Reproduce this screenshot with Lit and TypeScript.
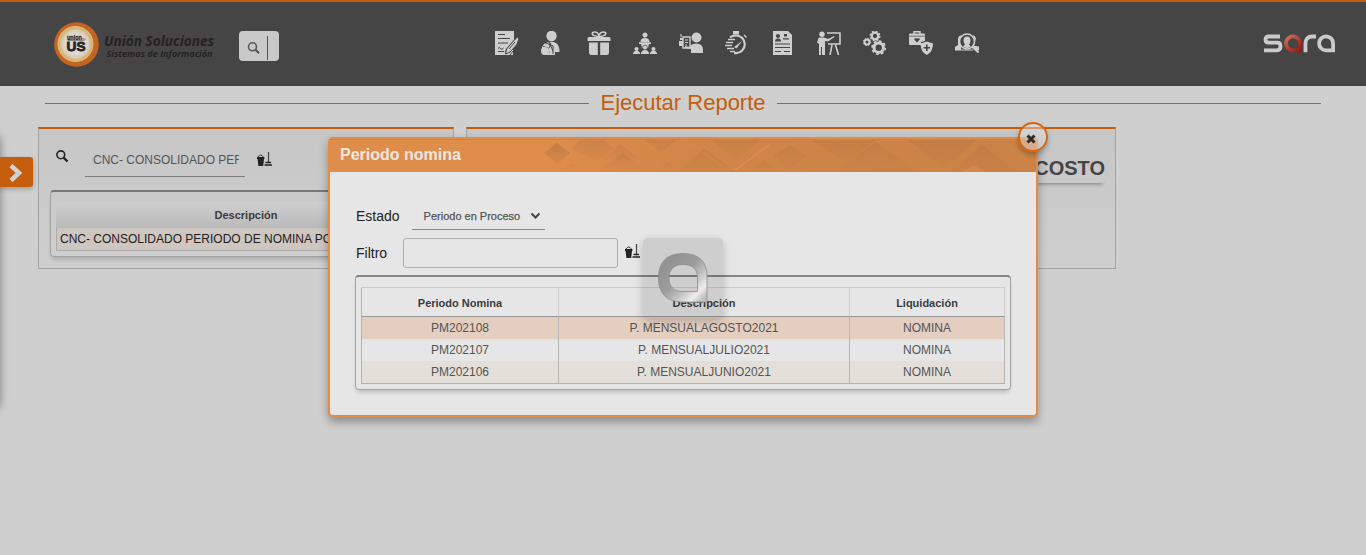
import { LitElement, html, css, svg } from "lit";
import { customElement } from "lit/decorators.js";

const navIcons = [
  // form with pen
  svg`<path d="M0 0h19v9l-8 9-1 4 4-1 4-4v7H0z"/><path d="M3 3.500h7M3 7.500h12M3 12h10" stroke="#454545" stroke-width="1.100"/><path d="M3 17.500q1-2 2.500 0t3-.5M3 20.500h6" fill="none" stroke="#454545"/><path d="M22.500 6l1.500 2-2.500 6-6.500 7-4.500 2 1-5 7-8z" stroke="#454545" stroke-width="1"/><path d="M14 18l6-7M15 24l3-4" stroke="#454545"/>`,
  // person with money
  svg`<circle cx="10.500" cy="5" r="5.200"/><path d="M3 13q7-4 12-1 3.500 2 3.500 9H14v3H2l-1-8z"/><path d="M5 12l7 3v8M8 11l4 9M10 12l-2 5M2 15.500l5 1.500 1 5" fill="none" stroke="#454545"/><circle cx="4" cy="20" r="4"/>`,
  // gift
  svg`<path d="M2 6h20q1.500 0 1.500 1.500V10H.5V7.500Q.5 6 2 6zM2 11.500h8.800V24H4.500Q2 24 2 21.500zM13.200 11.500H22v10q0 2.500-2.500 2.500h-6.300z"/><path d="M11 5.500C4 5 4 1 7.500 1 10 1 11.500 3 12 4.500 12.500 3 14 1 16.500 1 20 1 20 5 13 5.500z" fill="none" stroke="#cecece" stroke-width="1.600"/>`,
  // speaker and audience
  svg`<circle cx="12" cy="4" r="2.500"/><path d="M7.500 11q0-4 4.500-4t4.500 4zM6 11.200h12v1.800H6zM8 13h8l-1 4H9z"/><circle cx="3.500" cy="18" r="2"/><circle cx="12" cy="16.500" r="2.400" stroke="#454545" stroke-width=".7"/><circle cx="20.500" cy="18" r="2"/><path d="M0 23v-1q1-2.500 3.500-2.500T7 22v1zM8 23v-1q1-3 4-3t4 3v1zM17 23v-1q1-2.500 3.500-2.500T24 22v1z"/>`,
  // person holding a list
  svg`<circle cx="17.500" cy="6.500" r="5"/><path d="M11 15q2-2.500 6-2.500 7 0 7 6V22H12v-4l-6-1v-2l5 1z"/><path d="M4 6h7v11H4z" fill="none" stroke="#cecece" stroke-width="1.400"/><path d="M6 9h3M6 11.500h3M6 14h2" stroke="#cecece"/><path d="M0 10h4v5H0zM1 3l2 1-1 3zM1 7h3v2H1z"/>`,
  // stopwatch
  svg`<path d="M8 0h6v3.500H8z"/><path d="M11 4.500a8.800 8.800 0 0 1 0 17.600H9" fill="none" stroke="#cecece" stroke-width="2.200"/><path d="M11 4.500q-4 0-6 2" fill="none" stroke="#cecece" stroke-width="2"/><path d="M19 4l2.500 2.500M3 8.500h7M1 11.500h7M0 14.500h7M2 17.500h7M5 20.500h5" stroke="#cecece" stroke-width="1.400"/><path d="M9 16l8-6-5.500 7.500z"/>`,
  // résumé
  svg`<path d="M2 0h15l4 4v20H2z"/><circle cx="7" cy="5" r="2.100" fill="#454545"/><path d="M4 10.500q0-3 3-3t3 3zM13 3h3v2.500h-3z" fill="#454545"/><path d="M12 7.800h6M4 13h15M4 16.500h15M4 20.500h6M13 20.500h6" stroke="#454545" stroke-width="1.200"/>`,
  // trainer with board
  svg`<circle cx="5" cy="3.200" r="2.700"/><path d="M1 8.500q0-2 2-2h4l4 1.500 6-3 .5 1L11 10.500 8 10v14H5v-8H4v8H2V13L0 11.500z"/><path d="M10 2h13v11H11M15 14l-2 10M18.500 14l3 10" fill="none" stroke="#cecece" stroke-width="1.600"/>`,
  // gears
  svg`<g fill="none" stroke="#cecece"><circle cx="12" cy="5" r="3.300" stroke-width="2.300"/><circle cx="12" cy="5" r="4.900" stroke-width="1.300" stroke-dasharray="2 1.850"/><circle cx="4" cy="11" r="2.500" stroke-width="2"/><circle cx="4" cy="11" r="3.700" stroke-width="1" stroke-dasharray="1.500 1.400"/><circle cx="15.700" cy="16.700" r="4.700" stroke-width="3"/><circle cx="15.700" cy="16.700" r="6.600" stroke-width="1.700" stroke-dasharray="2.800 2.380"/></g>`,
  // briefcase and shield
  svg`<path d="M5 3V.8h6V3" fill="none" stroke="#cecece" stroke-width="1.500"/><path d="M1 2.500h14q1 0 1 1V10l-4 1v3H1q-1 0-1-1V3.500q0-1 1-1z"/><path d="M0 5.200h16" stroke="#454545" stroke-width=".7"/><path d="M8 11.500L5.200 8.500q0-2 2.800-1 2.800-1 2.800 1z" fill="#454545"/><path d="M17.800 10.500l6.200 2q0 8.500-6.200 11.500-6.300-3-6.300-11.500z"/><path d="M17.800 13.500v6.500M14.500 16.800h6.600" stroke="#454545" stroke-width="1.600"/>`,
  // talent search
  svg`<path d="M3 7.500q1-3.500 3-3v12l-6 1.500v-2l3-2zM21 7.500q-1-3.500-3-3v10l6 1.500v2l-6-1zM0 15.500l6-1v5H0zM18 14.500l6 1v4h-3z"/><circle cx="12" cy="10.500" r="7.500" fill="#454545" stroke="#cecece" stroke-width="1.600"/><path d="M12 5.500q3.500 0 3.500 4 0 2-1.500 4l2 2q-4 3-8 0l2-2q-1.500-2-1.500-4 0-4 3.500-4z"/><path d="M17 15.500l6.500 6" stroke="#cecece" stroke-width="2"/><path d="M6 19h12" stroke="#cecece" stroke-width="1"/>`,
];

const bucket = html`<svg class="bucket" width="15" height="15" viewBox="0 0 15 15">
  <path d="M0 5h7.400v2H7l-.8 7H1.400L.6 7H0z" fill="#222"/>
  <path d="M1 5q2.500-4 5.400 0" fill="none" stroke="#222" stroke-width=".9"/>
  <path d="M11.500 0v10" stroke="#444" stroke-width="1.200"/>
  <path d="M8.500 10.500h5.500M7.500 13h7.500" stroke="#222" stroke-width="1.600"/>
</svg>`;

const rows = [
  ["PM202108", "P. MENSUALAGOSTO2021", "NOMINA"],
  ["PM202107", "P. MENSUALJULIO2021", "NOMINA"],
  ["PM202106", "P. MENSUALJUNIO2021", "NOMINA"],
];

@customElement("app-root")
export class AppRoot extends LitElement {
  static styles = css`
    :host {
      display: block;
      position: relative;
      height: 555px;
      overflow: hidden;
      background: #cfcfcf;
      font-family: "Liberation Sans", Arial, sans-serif;
      color: #222;
    }
    * { box-sizing: border-box; }
    svg { display: block; flex: none; }
    .header {
      height: 86px;
      border-top: 2px solid #c65d0c;
      background: #454545;
      display: flex;
      padding-left: 53px;
      padding-right: 30px;
    }
    .brand { margin-top: 20px; width: 164px; }
    .search {
      margin: 29px 0 0 22px;
      width: 40px;
      height: 30px;
      border-radius: 4px;
      background: #c9c9c9;
    }
    .nav { display: flex; gap: 22px; margin: 29px 0 0 216px; height: 24px; }
    .sara { margin: 30px 0 0 auto; }
    .title {
      display: flex;
      align-items: center;
      gap: 11px;
      height: 33px;
      padding: 0 45px;
      font-size: 22px;
      color: #c65d0c;
    }
    .rule { flex: 1; height: 1px; margin-top: 2px; background: #c65d0c; }
    .panels { display: flex; gap: 12px; padding: 8px 0 0 38px; }
    .panel {
      height: 142px;
      border: 1px solid #a2a2a2;
      border-top: 2px solid #c65d0c;
      background: linear-gradient(#c6c6c6, #cfcfcf);
    }
    .left { width: 416px; padding: 0 11px; }
    .right { width: 650px; padding: 25px 10px; }
    .finder { display: flex; height: 48px; padding-left: 6px; }
    .lens { margin-top: 21px; }
    .value {
      margin-left: 16px;
      width: 160px;
      height: 48px;
      padding: 0 6px 0 8px;
      border-bottom: 1px solid #808080;
      font-size: 12px;
      line-height: 62px;
      color: #555;
    }
    .clip { overflow: hidden; white-space: nowrap; height: 47px; }
    .finder .bucket { margin: 23px 0 0 12px; }
    .box {
      border: 1px solid #a2a2a2;
      border-top: 2px solid #777;
      border-radius: 4px;
      box-shadow: 0 4px 5px -2px rgba(0, 0, 0, 0.2);
    }
    .left .box { margin-top: 13px; height: 67px; padding: 10px 5px 0; }
    .listhead {
      height: 26px;
      text-align: center;
      font: bold 11px/27px "Liberation Sans", Arial, sans-serif;
      color: #3c3c3c;
      border-radius: 3px 3px 0 0;
      background: linear-gradient(#cfcfcf, #b9b9b9);
    }
    .listrow {
      height: 23px;
      padding-left: 3px;
      border: 1px solid #aaa;
      border-top: 0;
      background: #cec6c1;
      font-size: 12px;
      line-height: 22px;
      white-space: nowrap;
      overflow: hidden;
    }
    .report {
      height: 29px;
      border-radius: 3px;
      text-align: right;
      font: bold 20px/29px "Liberation Sans", Arial, sans-serif;
      color: #454545;
      box-shadow: 0 4px 4px -3px rgba(0, 0, 0, 0.4);
    }
    .drawer {
      position: absolute;
      left: -10px;
      top: 137px;
      width: 10px;
      height: 270px;
      box-shadow: 0 0 8px rgba(0, 0, 0, 0.4);
    }
    .tab {
      position: absolute;
      left: 0;
      top: 157px;
      width: 33px;
      height: 30px;
      padding: 7px 0 0 9px;
      border-radius: 0 3px 3px 0;
      background: #c65d0c;
      box-shadow: 0 2px 5px rgba(0, 0, 0, 0.25);
    }
    .modal {
      position: absolute;
      left: 328px;
      top: 137px;
      width: 710px;
      height: 280px;
      border: 2px solid #df8d4b;
      border-radius: 5px;
      background: #e6e6e6;
      box-shadow: 0 5px 10px rgba(0, 0, 0, 0.32);
    }
    .bar {
      display: flex;
      justify-content: space-between;
      height: 33px;
      background: #df8d4b;
      border-top: 1px solid #d2813f;
      color: #eee8e2;
      padding-left: 10px;
      font: bold 16px/30px "Liberation Sans", Arial, sans-serif;
    }
    .content { padding: 29px 25px 0; }
    .line { display: flex; padding-left: 1px; font-size: 14px; }
    .line label { line-height: 30px; }
    .select {
      display: flex;
      justify-content: space-between;
      align-items: center;
      width: 133px;
      height: 29px;
      margin-left: 12px;
      padding: 2px 4px 0 12px;
      border-bottom: 1px solid #888;
      font: 500 11px/26px "Liberation Sans", Arial, sans-serif;
      color: #555;
      -webkit-text-stroke: 0.25px #555;
    }
    .filter { margin-top: 7px; }
    .field {
      width: 215px;
      height: 30px;
      margin-left: 16px;
      border: 1px solid #b0b0b0;
      border-radius: 3px;
    }
    .filter .bucket { margin: 6px 0 0 7px; }
    .wrap { width: 656px; height: 115px; margin-top: 7px; padding: 10px 5px 0; border-top-color: #858585; }
    .grid {
      width: 644px;
      height: 97px;
      display: grid;
      grid-template-columns: 198px 291px 155px;
      grid-template-rows: 29px 22px 22px 23px;
      border-top: 1px solid #ccc;
      text-align: center;
      font-size: 12px;
      line-height: 22px;
      color: #555;
    }
    .cell { border-right: 1px solid #b5b5b5; }
    .cell:nth-child(3n + 1) { border-left: 1px solid #b5b5b5; }
    .head {
      font-weight: bold;
      font-size: 11px;
      line-height: 30px;
      color: #3c3c3c;
      border-color: #ccc;
      border-bottom: 1px solid #999;
    }
    .r0 { background: #e3cebf; }
    .r2 { background: #e4dfd8; border-bottom: 1px solid #b0b0b0; }
    .close {
      position: absolute;
      left: 1018px;
      top: 122px;
      width: 30px;
      height: 30px;
      display: grid;
      place-items: center;
      padding: 3px 4px 0 0;
      border: 2px solid #d9660f;
      border-radius: 50%;
      background: rgba(225, 225, 225, 0.45);
      box-shadow: 0 3px 5px rgba(0, 0, 0, 0.25);
    }
    .loader {
      position: absolute;
      left: 643px;
      top: 238px;
      width: 80px;
      height: 80px;
      padding: 15px;
      border-radius: 5px;
      background: rgba(0, 0, 0, 0.1);
      box-shadow: 0 3px 9px rgba(0, 0, 0, 0.2);
    }
  `;

  render() {
    return html`
      <header class="header">
        <svg class="brand" width="164" height="46" viewBox="0 0 164 46">
          <defs>
            <radialGradient id="disc">
              <stop offset=".5" stop-color="#dedad8"/><stop offset=".72" stop-color="#d9cdb5"/>
              <stop offset=".87" stop-color="#d2b56c"/><stop offset=".95" stop-color="#d8b58a"/>
              <stop offset="1" stop-color="#c8641c"/>
            </radialGradient>
          </defs>
          <circle cx="23.500" cy="22.500" r="22.300" fill="#c3651f"/>
          <circle cx="22.500" cy="22" r="18.500" fill="url(#disc)"/>
          <text x="14" y="17.500" font-family="Liberation Sans" font-weight="bold" font-size="7" textLength="15" lengthAdjust="spacingAndGlyphs" fill="#292326" stroke="#292326" stroke-width=".3">union</text>
          <path d="M29 17h3.500" stroke="#b33"/>
          <path d="M14.500 18.500h17" stroke="#555" stroke-width=".6"/>
          <text x="13.500" y="29" font-family="Liberation Sans" font-weight="bold" font-size="13" textLength="19" lengthAdjust="spacingAndGlyphs" fill="#292326" stroke="#292326" stroke-width=".8">US</text>
          <text x="51" y="23.500" font-family="Open Sans" font-style="italic" font-weight="bold" font-size="13.500" textLength="110" lengthAdjust="spacingAndGlyphs" fill="#262224">Unión Soluciones</text>
          <text x="53.500" y="35" font-family="Open Sans" font-style="italic" font-weight="bold" font-size="9.500" textLength="106" lengthAdjust="spacingAndGlyphs" fill="#262224">Sistemas de Información</text>
        </svg>
        <div class="search">
          <svg width="40" height="30" viewBox="0 0 40 30" fill="none" stroke="#555">
            <circle cx="13.500" cy="15.800" r="4" stroke-width="1.600"/><path d="M16.500 18.800l3.500 3.400" stroke-width="2.200"/>
            <path d="M28.500 5v24"/>
          </svg>
        </div>
        <nav class="nav">
          ${navIcons.map((i) => html`<svg width="24" height="24" viewBox="0 0 24 24" fill="#cecece">${i}</svg>`)}
        </nav>
        <svg class="sara" width="74" height="22" viewBox="0 0 74 22" fill="none" stroke="#cbcbcb" stroke-width="3.800">
          <defs><linearGradient id="red" x1="0" y1="0" x2="1" y2="1"><stop offset="0" stop-color="#c9765f"/><stop offset=".5" stop-color="#b8402f"/><stop offset="1" stop-color="#a01414"/></linearGradient></defs>
          <path d="M18 4.500H6.500Q3.500 4.500 3.500 7.500t3 3.200h9q3 0 3 3.500t-3 4.200H2"/>
          <path d="M38 18.400H30.500a7 7 0 1 1 7.500-7z" stroke="url(#red)"/>
          <path d="M43.500 20.300V11.500q0-7 7-7H54"/>
          <path d="M71.100 18.400H64a7 7 0 1 1 7.100-7z"/>
        </svg>
      </header>
      <div class="title"><span class="rule"></span><span>Ejecutar Reporte</span><span class="rule"></span></div>
      <main class="panels">
        <section class="panel left">
          <div class="finder">
            <svg class="lens" width="13" height="13" viewBox="0 0 13 13" fill="none" stroke="#222"><circle cx="4.800" cy="4.800" r="3.900" stroke-width="1.600"/><path d="M7.500 7.500l4 4" stroke-width="2.400"/></svg>
            <div class="value"><div class="clip">CNC- CONSOLIDADO PERIODO DE NOMINA</div></div>
            ${bucket}
          </div>
          <div class="box">
            <div class="listhead">Descripción</div>
            <div class="listrow">CNC- CONSOLIDADO PERIODO DE NOMINA POR CENTRO DE COSTO</div>
          </div>
        </section>
        <section class="panel right"><div class="report">CENTRO DE COSTO</div></section>
      </main>
      <div class="drawer"></div>
      <div class="tab"><svg width="15" height="18" viewBox="0 0 15 18"><path d="M2 1.500l8 7.500-8 7.500" fill="none" stroke="#d2d2d2" stroke-width="4.500"/></svg></div>
      <section class="modal">
        <div class="bar">
          <span>Periodo nomina</span>
          <svg width="494" height="32" viewBox="0 0 494 32">
            <defs>
              <linearGradient id="fade" gradientUnits="userSpaceOnUse" x1="0" x2="494" y1="0" y2="0"><stop offset="0" stop-color="#bd7b43" stop-opacity="0"/><stop offset=".3" stop-color="#bd7b43" stop-opacity=".4"/><stop offset="1" stop-color="#bd7b43" stop-opacity=".6"/></linearGradient>
              <linearGradient id="dia" x2="0" y2="1"><stop offset="0" stop-color="#b07040" stop-opacity=".6"/><stop offset="1" stop-color="#bc7841" stop-opacity="0"/></linearGradient>
              <linearGradient id="soft" x2="0" y2="1"><stop offset="0" stop-color="#b07040" stop-opacity=".3"/><stop offset="1" stop-color="#bc7841" stop-opacity=".12"/></linearGradient>
            </defs>
            <path d="M0 0h494v32H0z" fill="url(#fade)"/>
            <path d="M15 3l13 10-13 11L2 13zM29 23l12 9H17zM81 13l25 19H56zM126 22l14 10h-28z" fill="url(#dia)"/>
            <g fill="url(#soft)">
              <path d="M37 0h26l9 9-17 12-25-12z"/><path d="M78 4l20 15H62z"/><path d="M103 0h31l-15 13z"/>
              <path d="M163 8l32 24h-60z"/><path d="M170 0h48l-24 20z"/><path d="M222 20l16 12h-32z"/>
              <path d="M248 5l17 11-17 13-17-13z"/><path d="M270 0h64l-30 22z"/><path d="M334 2l42 30h-84z"/>
              <path d="M366 0h70l-35 28z"/><path d="M440 4l34 28h-64z"/>
            </g>
            <path d="M161 6l32 24M150 4l30 22" fill="none" stroke="#d98e52" stroke-width=".6"/>
            <path d="M193 30l34-25" fill="none" stroke="#e09a5d" stroke-width=".8"/>
            <path d="M420 32l12-7 12 7z" fill="#df8d4b" opacity=".5"/>
          </svg>
        </div>
        <div class="content">
          <div class="line"><label>Estado</label>
            <div class="select">Periodo en Proceso<svg width="11" height="8" viewBox="0 0 11 8"><path d="M1.500 1.500l4 4 4-4" fill="none" stroke="#444" stroke-width="2"/></svg></div>
          </div>
          <div class="line filter"><label>Filtro</label><div class="field"></div>${bucket}</div>
          <div class="box wrap">
            <div class="grid">
              ${["Periodo Nomina", "Descripción", "Liquidación"].map((h) => html`<div class="cell head">${h}</div>`)}
              ${rows.map((r, i) => r.map((c) => html`<div class="cell r${i}">${c}</div>`))}
            </div>
          </div>
        </div>
      </section>
      <div class="close"><svg width="10" height="10" viewBox="0 0 10 10"><path d="M1.500 1.500l7 7M8.500 1.500l-7 7" stroke="#2b2b2b" stroke-width="3"/></svg></div>
      <div class="loader">
        <svg width="50" height="50" viewBox="0 0 50 50">
          <defs>
            <linearGradient id="metal" x1="0.150" y1="0.200" x2="0.900" y2="0.950"><stop offset="0" stop-color="#929292"/><stop offset=".4" stop-color="#9d9d9d"/><stop offset=".65" stop-color="#c5c5c5"/><stop offset=".85" stop-color="#ededed"/><stop offset="1" stop-color="#c0c0c0"/></linearGradient>
          </defs>
          <path fill-rule="evenodd" fill="url(#metal)" stroke="#8e8e8e" stroke-width=".8" d="M25 .5C41 .5 49 9 49 23v26H26C9 49 .5 41 .5 25S9 .5 25 .5zM25 11.500c-9 0-14 5-14 13.500S16 38.500 24 38.500h15.500V24c0-8-5.500-12.500-14.500-12.500z"/>
        </svg>
      </div>
    `;
  }
}
